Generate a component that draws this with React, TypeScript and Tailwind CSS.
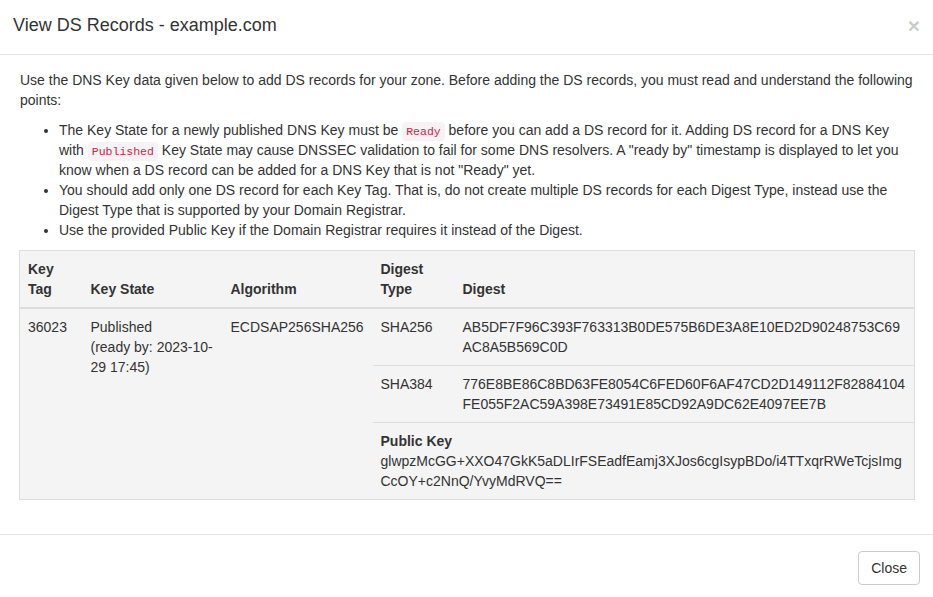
const digests = [
  { type: 'SHA256', value: 'AB5DF7F96C393F763313B0DE575B6DE3A8E10ED2D90248753C69AC8A5B569C0D' },
  { type: 'SHA384', value: '776E8BE86C8BD63FE8054C6FED60F6AF47CD2D149112F82884104FE055F2AC59A398E73491E85CD92A9DC62E4097EE7B' },
]

const publicKey = 'glwpzMcGG+XXO47GkK5aDLIrFSEadfEamj3XJos6cgIsypBDo/i4TTxqrRWeTcjsImgCcOY+c2NnQ/YvyMdRVQ=='

function Code({ children }: { children: string }) {
  return (
    <code className="rounded-[4px] bg-[#f9f2f4] px-[4px] py-[3px] font-['Liberation_Mono',monospace] text-[11.5px] leading-none text-[#c7254e]">
      {children}
    </code>
  )
}

export default function App() {
  return (
    <div className="h-[597px] w-[933px] overflow-hidden bg-white font-['Liberation_Sans',Arial,sans-serif] text-[14px] leading-[20px] text-[#333]">
      {/* header */}
      <div className="flex h-[55px] items-start justify-between border-b border-[#e5e5e5] pl-[13px] pr-[13px] pt-[12px]">
        <h4 className="text-[18px] leading-[26px] font-medium">View DS Records - example.com</h4>
        <button className="mt-[3px] text-[21px] leading-none font-bold text-black opacity-20">×</button>
      </div>

      {/* body */}
      <div className="pb-[15px] pl-[19px] pr-[18px] pt-[15px]">
        <p className="mb-[10px] pl-[1px]">
          Use the DNS Key data given below to add DS records for your zone. Before adding the DS records, you must read and understand the following points:
        </p>
        <ul className="mb-[10px] list-disc pl-[40px]">
          <li>
            The Key State for a newly published DNS Key must be <Code>Ready</Code> before you can add a DS record for it. Adding DS record for a DNS Key with <Code>Published</Code> Key State may cause DNSSEC validation to fail for some DNS resolvers. A "ready by" timestamp is displayed to let you know when a DS record can be added for a DNS Key that is not "Ready" yet.
          </li>
          <li>
            You should add only one DS record for each Key Tag. That is, do not create multiple DS records for each Digest Type, instead use the Digest Type that is supported by your Domain Registrar.
          </li>
          <li>Use the provided Public Key if the Domain Registrar requires it instead of the Digest.</li>
        </ul>

        <table className="mb-[19px] w-full table-fixed border border-[#dddddd] bg-[#f4f4f4]">
          <colgroup>
            <col className="w-[63px]" />
            <col className="w-[140px]" />
            <col className="w-[150px]" />
            <col className="w-[82px]" />
            <col />
          </colgroup>
          <thead>
            <tr className="border-b-2 border-[#dddddd] text-left align-bottom">
              <th className="p-[8px] font-bold">Key Tag</th>
              <th className="p-[8px] font-bold">Key State</th>
              <th className="p-[8px] font-bold">Algorithm</th>
              <th className="p-[8px] font-bold">Digest Type</th>
              <th className="p-[8px] font-bold">Digest</th>
            </tr>
          </thead>
          <tbody className="align-top">
            <tr>
              <td rowSpan={3} className="p-[8px]">36023</td>
              <td rowSpan={3} className="p-[8px]">
                Published
                <br />
                (ready by: 2023-10-29 17:45)
              </td>
              <td rowSpan={3} className="p-[8px]">ECDSAP256SHA256</td>
              <td className="p-[8px]">{digests[0].type}</td>
              <td className="break-all p-[8px]">{digests[0].value}</td>
            </tr>
            <tr>
              <td className="border-t border-[#dddddd] p-[8px]">{digests[1].type}</td>
              <td className="break-all border-t border-[#dddddd] p-[8px]">{digests[1].value}</td>
            </tr>
            <tr>
              <td colSpan={2} className="break-all border-t border-[#dddddd] p-[8px]">
                <b className="block">Public Key</b>
                {publicKey}
              </td>
            </tr>
          </tbody>
        </table>
      </div>

      {/* footer */}
      <div className="flex justify-end border-t border-[#e5e5e5] pb-[15px] pr-[13px] pt-[16px]">
        <button className="rounded-[4px] border border-[#cccccc] bg-white px-[12px] py-[6px] text-[14px] leading-[20px] text-[#333]">
          Close
        </button>
      </div>
    </div>
  )
}
